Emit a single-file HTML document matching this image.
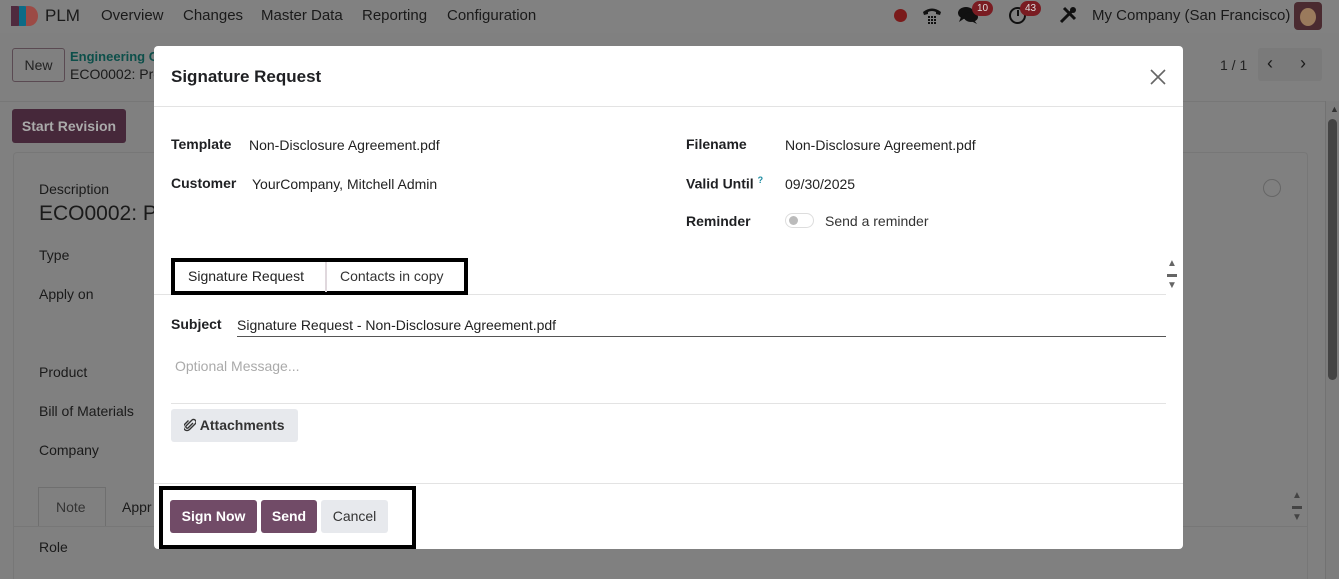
<!DOCTYPE html>
<html><head><meta charset="utf-8"><style>
*{box-sizing:border-box;margin:0;padding:0}
html,body{width:1339px;height:579px;overflow:hidden}
body{background:#808080;font-family:"Liberation Sans",sans-serif;font-size:14px;color:#1e1e1e;position:relative}
.a{position:absolute;white-space:nowrap}
.bg{color:#1a1a1a}
.nav{position:absolute;left:0;top:0;width:1339px;height:33px;background:#818181}
.m{position:absolute;left:154px;top:46px;width:1029px;height:503px;background:#fff;border-radius:4px}
.m .a{color:#222}
.lbl{font-weight:bold;font-size:14px;color:#1f2023!important}
.btn{position:absolute;border-radius:3px;font-weight:bold;font-size:14px;text-align:center;line-height:33px;height:33px}
</style></head><body>
<div class="nav"></div>
<svg class="a" style="left:10px;top:5px" width="28" height="22" viewBox="0 0 28 22"><path d="M1 1h6a10 10 0 0 1 0 20H1z" fill="#4f2a3e"/><path d="M9 1h5a10 10 0 0 1 0 20H9z" fill="#0d6b86"/><path d="M16 1h3a9 10 0 0 1 0 20h-3z" fill="#9c4a45"/></svg>
<div class="a bg" style="left:45px;top:6px;font-size:17px">PLM</div>
<div class="a bg" style="left:101px;top:7px;font-size:15px">Overview</div>
<div class="a bg" style="left:183px;top:7px;font-size:15px">Changes</div>
<div class="a bg" style="left:261px;top:7px;font-size:15px">Master Data</div>
<div class="a bg" style="left:362px;top:7px;font-size:15px">Reporting</div>
<div class="a bg" style="left:447px;top:7px;font-size:15px">Configuration</div>
<div class="a" style="left:894px;top:9px;width:13px;height:13px;border-radius:50%;background:#7a1a1a"></div>
<svg class="a" style="left:922px;top:5px" width="20" height="20" viewBox="0 0 20 20"><path d="M1 7q9-7 18 0l-1 3-4-1v-2q-4-2-8 0v2l-4 1z" fill="#111"/><g fill="#111"><rect x="6" y="11" width="2" height="2"/><rect x="9" y="11" width="2" height="2"/><rect x="12" y="11" width="2" height="2"/><rect x="6" y="14" width="2" height="2"/><rect x="9" y="14" width="2" height="2"/><rect x="12" y="14" width="2" height="2"/><rect x="6" y="17" width="2" height="2"/><rect x="9" y="17" width="2" height="2"/><rect x="12" y="17" width="2" height="2"/></g></svg>
<svg class="a" style="left:957px;top:5px" width="22" height="20" viewBox="0 0 22 20"><ellipse cx="9" cy="8" rx="8" ry="6" fill="#111"/><path d="M4 12l-2 5 6-4z" fill="#111"/><ellipse cx="14" cy="12" rx="7" ry="5" fill="#111"/><path d="M17 15l3 4-6-3z" fill="#111"/></svg>
<div class="a" style="left:972px;top:1px;background:#7a1c22;color:#ddd;font-size:10px;border-radius:8px;padding:2px 5px">10</div>
<div class="a" style="left:1009px;top:7px;width:17px;height:17px;border:2.5px solid #111;border-radius:50%"></div>
<div class="a" style="left:1017px;top:10px;width:2px;height:6px;background:#111"></div>
<div class="a" style="left:1020px;top:1px;background:#7a1c22;color:#ddd;font-size:10px;border-radius:8px;padding:2px 5px">43</div>
<svg class="a" style="left:1059px;top:6px" width="18" height="18" viewBox="0 0 18 18"><path d="M2 16L13 5M5 2l11 11" stroke="#111" stroke-width="3"/><circle cx="14" cy="4" r="3" fill="#111"/></svg>
<div class="a bg" style="left:1092px;top:7px;font-size:15px">My Company (San Francisco)</div>
<div class="a" style="left:1294px;top:2px;width:28px;height:28px;border-radius:4px;background:#4a2a30"><div style="margin:6px 6px;width:16px;height:18px;border-radius:50%;background:#9a7a5c"></div></div>
<div class="a" style="left:12px;top:48px;width:53px;height:34px;border:1px solid #5a4a52;border-radius:3px;text-align:center;line-height:32px;font-size:14px;color:#222">New</div>
<div class="a" style="left:70px;top:49px;font-size:13px;font-weight:bold;color:#0d4f4a">Engineering C</div>
<div class="a bg" style="left:70px;top:66px;font-size:14px">ECO0002: Pro</div>
<div class="a" style="left:1220px;top:57px;font-size:14px;color:#222">1 / 1</div>
<div class="a" style="left:1258px;top:48px;width:64px;height:33px;background:#7a7a7a;border-radius:3px"></div>
<div class="a bg" style="left:1267px;top:53px;font-size:18px">‹</div><div class="a bg" style="left:1300px;top:53px;font-size:18px">›</div>
<div class="a" style="left:0;top:101px;width:1325px;height:1px;background:#777"></div>
<div class="a" style="left:12px;top:109px;width:114px;height:34px;background:#46283a;border-radius:3px;color:#aaa;font-weight:bold;text-align:center;line-height:34px;font-size:14px">Start Revision</div>
<div class="a" style="left:13px;top:152px;width:1295px;height:427px;border:1px solid #777;border-bottom:none;border-radius:4px 4px 0 0"></div>
<div class="a" style="left:1263px;top:179px;width:18px;height:18px;border-radius:50%;border:1px solid #666"></div>
<div class="a bg" style="left:39px;top:181px">Description</div>
<div class="a bg" style="left:39px;top:202px;font-size:21px">ECO0002: Pr</div>
<div class="a bg" style="left:39px;top:247px">Type</div>
<div class="a bg" style="left:39px;top:286px">Apply on</div>
<div class="a bg" style="left:39px;top:364px">Product</div>
<div class="a bg" style="left:39px;top:403px">Bill of Materials</div>
<div class="a bg" style="left:39px;top:442px">Company</div>
<div class="a" style="left:38px;top:487px;width:68px;height:40px;border:1px solid #6f6f6f;border-bottom:none"></div>
<div class="a bg" style="left:56px;top:499px;color:#333">Note</div>
<div class="a bg" style="left:122px;top:499px">Appr</div>
<div class="a" style="left:13px;top:526px;width:1295px;height:1px;background:#777"></div>
<div class="a bg" style="left:39px;top:539px">Role</div>
<div class="a" style="left:1292px;top:490px;color:#444;font-size:10px;line-height:11px">▲<br>▬<br>▼</div>
<div class="a" style="left:1325px;top:101px;width:14px;height:478px;background:#7d7d7d;border-left:1px solid #727272"></div>
<div class="a" style="left:1330px;top:104px;color:#333;font-size:9px">▲</div>
<div class="a" style="left:1328px;top:119px;width:9px;height:261px;background:#444;border-radius:5px"></div>
<div class="m">
 <div class="a" style="left:17px;top:21px;font-size:17px;font-weight:bold;color:#1f2023">Signature Request</div>
 <svg class="a" style="left:996px;top:23px" width="16" height="16" viewBox="0 0 16 16"><path d="M1 1l14 14M15 1L1 15" stroke="#666" stroke-width="1.6"/></svg>
 <div class="a" style="left:0;top:60px;width:1029px;height:1px;background:#e3e3e3"></div>
 <div class="a lbl" style="left:17px;top:90px">Template</div>
 <div class="a" style="left:95px;top:91px">Non-Disclosure Agreement.pdf</div>
 <div class="a lbl" style="left:17px;top:129px">Customer</div>
 <div class="a" style="left:98px;top:130px">YourCompany, Mitchell Admin</div>
 <div class="a lbl" style="left:532px;top:90px">Filename</div>
 <div class="a" style="left:631px;top:91px">Non-Disclosure Agreement.pdf</div>
 <div class="a lbl" style="left:532px;top:129px">Valid Until <sup style="color:#1a8aa0;font-size:9px">?</sup></div>
 <div class="a" style="left:631px;top:130px">09/30/2025</div>
 <div class="a lbl" style="left:532px;top:167px">Reminder</div>
 <div class="a" style="left:631px;top:167px;width:29px;height:15px;border:1px solid #ddd;border-radius:8px"><div style="margin:2px 3px;width:9px;height:9px;border-radius:50%;background:#bbb"></div></div>
 <div class="a" style="left:671px;top:167px;color:#333">Send a reminder</div>
 <div class="a" style="left:0;top:248px;width:1012px;height:1px;background:#e3e3e3"></div>
 <div class="a" style="left:17px;top:212px;width:297px;height:37px;border:4px solid #000"></div>
 <div class="a" style="left:171px;top:216px;width:2px;height:30px;background:#e0d8dd"></div>
 <div class="a" style="left:34px;top:222px">Signature Request</div>
 <div class="a" style="left:186px;top:222px;color:#333">Contacts in copy</div>
 <div class="a" style="left:1013px;top:212px;color:#666;font-size:10px;line-height:11px">▲<br>▬<br>▼</div>
 <div class="a lbl" style="left:17px;top:270px">Subject</div>
 <div class="a" style="left:83px;top:271px">Signature Request - Non-Disclosure Agreement.pdf</div>
 <div class="a" style="left:83px;top:290px;width:929px;height:1px;background:#555"></div>
 <div class="a" style="left:21px;top:312px;color:#aaa">Optional Message...</div>
 <div class="a" style="left:17px;top:357px;width:995px;height:1px;background:#e3e3e3"></div>
 <div class="btn" style="left:17px;top:363px;width:127px;background:#e7e9ed;color:#333"><svg width="12" height="14" viewBox="0 0 12 14" style="vertical-align:-2px"><path d="M9 5l-5 5a1.5 1.5 0 0 1-2-2l6-6a2.5 2.5 0 0 1 3.5 3.5l-6 6a3.5 3.5 0 0 1-5-5l4-4" stroke="#333" stroke-width="1.4" fill="none"/></svg> Attachments</div>
 <div class="a" style="left:0;top:437px;width:1029px;height:1px;background:#e3e3e3"></div>
 <div class="a" style="left:5px;top:440px;width:257px;height:63px;border:4px solid #000"></div>
 <div class="btn" style="left:16px;top:454px;width:87px;background:#714b67;color:#fff">Sign Now</div>
 <div class="btn" style="left:107px;top:454px;width:56px;background:#714b67;color:#fff">Send</div>
 <div class="btn" style="left:167px;top:454px;width:67px;background:#e7e9ed;color:#333;font-weight:normal">Cancel</div>
</div>
</body></html>
